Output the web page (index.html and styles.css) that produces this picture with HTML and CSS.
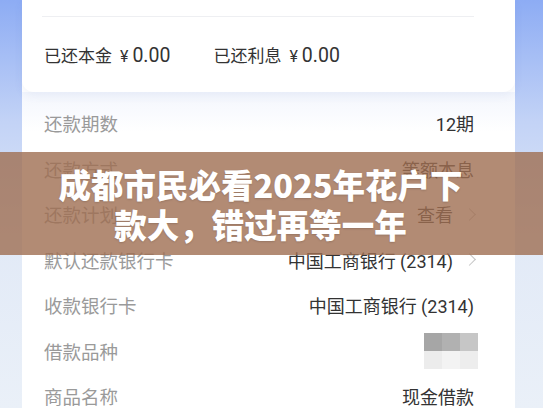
FILE: index.html
```html
<!DOCTYPE html>
<html lang="zh-CN">
<head>
  <meta charset="UTF-8" />
  <meta name="viewport" content="width=device-width, initial-scale=1.0" />
  <title>成都市民必看2025年花户下款大</title>
  <link rel="stylesheet" href="styles.css">
</head>
<body>
  <div class="screen">
    <div class="sheet">
      <div class="summary">
        <div class="divider"></div>
        <div class="paid">
          <span>已还本金<span class="money"><i>¥</i>0.00</span></span>
          <span>已还利息<span class="money"><i>¥</i>0.00</span></span>
        </div>
      </div>

      <div class="details">
        <div class="row">
          <span class="label">还款期数</span>
          <span class="value">12期</span>
        </div>
        <div class="row">
          <span class="label">还款方式</span>
          <span class="value">等额本息</span>
        </div>
        <div class="row">
          <span class="label">还款计划</span>
          <span class="value link">查看<i class="chevron"></i></span>
        </div>
        <div class="row">
          <span class="label">默认还款银行卡</span>
          <span class="value link">中国工商银行 (2314)<i class="chevron"></i></span>
        </div>
        <div class="row">
          <span class="label">收款银行卡</span>
          <span class="value">中国工商银行 (2314)</span>
        </div>
        <div class="row">
          <span class="label">借款品种</span>
          <span class="mosaic">
            <b class="m1"></b><b class="m2"></b><b class="m3"></b>
            <b class="m4"></b><b class="m5"></b><b class="m6"></b>
          </span>
        </div>
        <div class="row">
          <span class="label">商品名称</span>
          <span class="value">现金借款</span>
        </div>
      </div>
    </div>

    <div class="banner">
      <h1>成都市民必看2025年花户下款大，错过再等一年</h1>
    </div>
  </div>
</body>
</html>
```

FILE: styles.css
```css
* {
  margin: 0;
  padding: 0;
  box-sizing: border-box;
}

body {
  font-family: Roboto, "Noto Sans CJK SC", sans-serif;
  background: #eaf0f8;
  color: #333;
}

.screen {
  position: relative;
  width: 543px;
  height: 408px;
  overflow: hidden;
  background: linear-gradient(180deg, #8dacf4 0%, #c3d3f6 30%, #e2eaf7 60%, #eaf0f8 100%);
}

.sheet {
  margin: 0 28px 0 22px;
  height: 100%;
  background: #fff;
}

.summary {
  height: 92px;
  padding: 16px 41px 0 22px;
  background: #fff;
  border-radius: 0 0 12px 12px;
  box-shadow: 0 4px 10px rgba(70, 100, 170, 0.07);
  position: relative;
}

.divider {
  height: 1px;
  background: #eeeff2;
  margin-left: -2px;
}

.paid {
  display: flex;
  align-items: center;
  gap: 43px;
  margin-top: 27px;
  font-size: 17px;
  line-height: 24px;
  color: #333;
}

.money {
  font-size: 19.5px;
  margin-left: 8px;
}

.money i {
  font-style: normal;
  font-size: 16px;
  margin-right: 4px;
}

.details {
  padding: 8.5px 41px 0 22px;
  background: linear-gradient(180deg, #f3f6fd 0px, #fff 40px);
}

.row {
  height: 45.5px;
  display: flex;
  align-items: center;
  justify-content: space-between;
  font-size: 18.5px;
}

.label {
  color: #9a9a9a;
}

.value {
  color: #333;
  font-size: 18px;
  display: flex;
  align-items: center;
}

.link {
  margin-right: -4px;
}

.chevron {
  display: inline-block;
  width: 9px;
  height: 9px;
  border-top: 1.5px solid #c4c4c4;
  border-right: 1.5px solid #c4c4c4;
  transform: rotate(45deg);
  margin-left: 12px;
  margin-right: 4px;
}

.mosaic {
  display: grid;
  grid-template-columns: repeat(3, 18px);
  grid-template-rows: 18px 18px;
  margin-right: -4px;
}

.mosaic b { display: block; }
.m1 { background: #a6a6a6; }
.m2 { background: #b1b1b1; }
.m3 { background: #c6c6c6; }
.m4 { background: #ececec; }
.m5 { background: #f3f3f3; }
.m6 { background: #ededed; }

.banner {
  position: absolute;
  left: 0;
  right: 0;
  top: 152px;
  height: 103px;
  padding: 0 70px 0 48px;
  display: flex;
  align-items: center;
  justify-content: center;
  background: rgba(159, 110, 81, 0.8);
}

.banner h1 {
  font-family: "Noto Sans CJK SC", sans-serif;
  font-weight: 900;
  font-size: 32.5px;
  line-height: 40px;
  color: #fff;
  text-align: center;
  text-shadow: 0 1px 2px rgba(0, 0, 0, 0.15);
}
```
